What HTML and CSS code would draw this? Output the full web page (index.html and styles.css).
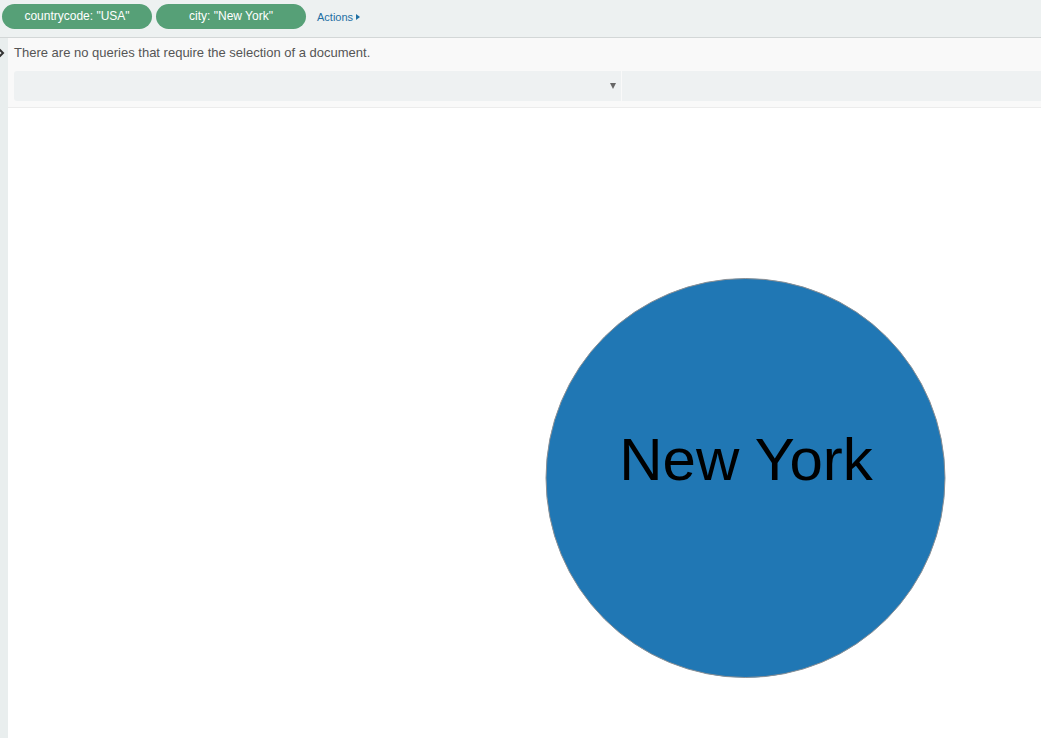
FILE: index.html
```html
<!DOCTYPE html>
<html>
<head>
<meta charset="utf-8">
<link rel="stylesheet" href="styles.css">
</head>
<body>
<div class="topbar">
  <div class="pill">countrycode: "USA"</div>
  <div class="pill">city: "New York"</div>
  <a class="actions">Actions<span class="tri"></span></a>
</div>
<div class="main">
  <div class="sidebar">
    <svg class="chev" width="8" height="10" viewBox="0 0 8 10"><path d="M0.5 1.5 L4 5 L0.5 8.5" fill="none" stroke="#333" stroke-width="2"/></svg>
  </div>
  <div class="content">
    <div class="panel">
      <div class="msg">There are no queries that require the selection of a document.</div>
      <div class="selrow">
        <div class="sel left"><span class="caret"></span></div>
        <div class="sel right"></div>
      </div>
    </div>
    <svg class="chart" width="1033" height="630" viewBox="0 0 1033 630">
      <circle cx="737.5" cy="370" r="199.5" fill="#2077b4" stroke="#8a8f94" stroke-width="1"/>
      <text x="738" y="372" text-anchor="middle" class="label">New York</text>
    </svg>
  </div>
</div>
</body>
</html>
```
FILE: styles.css
```css
html, body { margin: 0; padding: 0; }
body {
  font-family: "Liberation Sans", Arial, sans-serif;
  background: #fff;
  width: 1041px;
  height: 738px;
  overflow: hidden;
}
.topbar {
  background: #edf1f1;
  border-bottom: 1px solid #d3d7d7;
  display: flex;
  align-items: flex-start;
  padding: 4px 0 0 2px;
  box-sizing: border-box;
  height: 38px;
  gap: 4px;
}
.pill {
  width: 150px;
  height: 25px;
  line-height: 24px;
  border-radius: 13px;
  background: #56a077;
  color: #fff;
  font-size: 12px;
  text-align: center;
}
.actions {
  margin-left: 7px;
  margin-top: 1px;
  font-size: 11px;
  line-height: 24px;
  color: #1e6fa3;
  display: flex;
  align-items: center;
}
.tri {
  display: inline-block;
  width: 0; height: 0;
  border-top: 3px solid transparent;
  border-bottom: 3px solid transparent;
  border-left: 4px solid #1e6fa3;
  margin-left: 3px;
}
.main {
  display: flex;
  height: 700px;
}
.sidebar {
  width: 8px;
  background: #e9eeee;
  position: relative;
}
.chev {
  position: absolute;
  left: -1px;
  top: 10px;
}
.content {
  flex: 1;
  display: flex;
  flex-direction: column;
}
.panel {
  background: #f9f9f9;
  padding: 7px 0 6px 6px;
  border-bottom: 1px solid #ececec;
}
.msg {
  font-size: 13px;
  color: #555;
  line-height: 16px;
  margin-bottom: 10px;
}
.selrow {
  display: flex;
  height: 30px;
  gap: 1px;
}
.sel {
  background: #eef1f2;
  height: 30px;
}
.sel.left {
  width: 607px;
  border-radius: 3px 0 0 3px;
  position: relative;
}
.sel.right {
  flex: 1;
}
.caret {
  position: absolute;
  left: 596px;
  top: 12px;
  width: 0; height: 0;
  border-left: 3px solid transparent;
  border-right: 3px solid transparent;
  border-top: 6px solid #666;
}
.chart {
  display: block;
}
.label {
  font-family: "Liberation Sans", Arial, sans-serif;
  font-size: 60px;
  fill: #000;
}
```
